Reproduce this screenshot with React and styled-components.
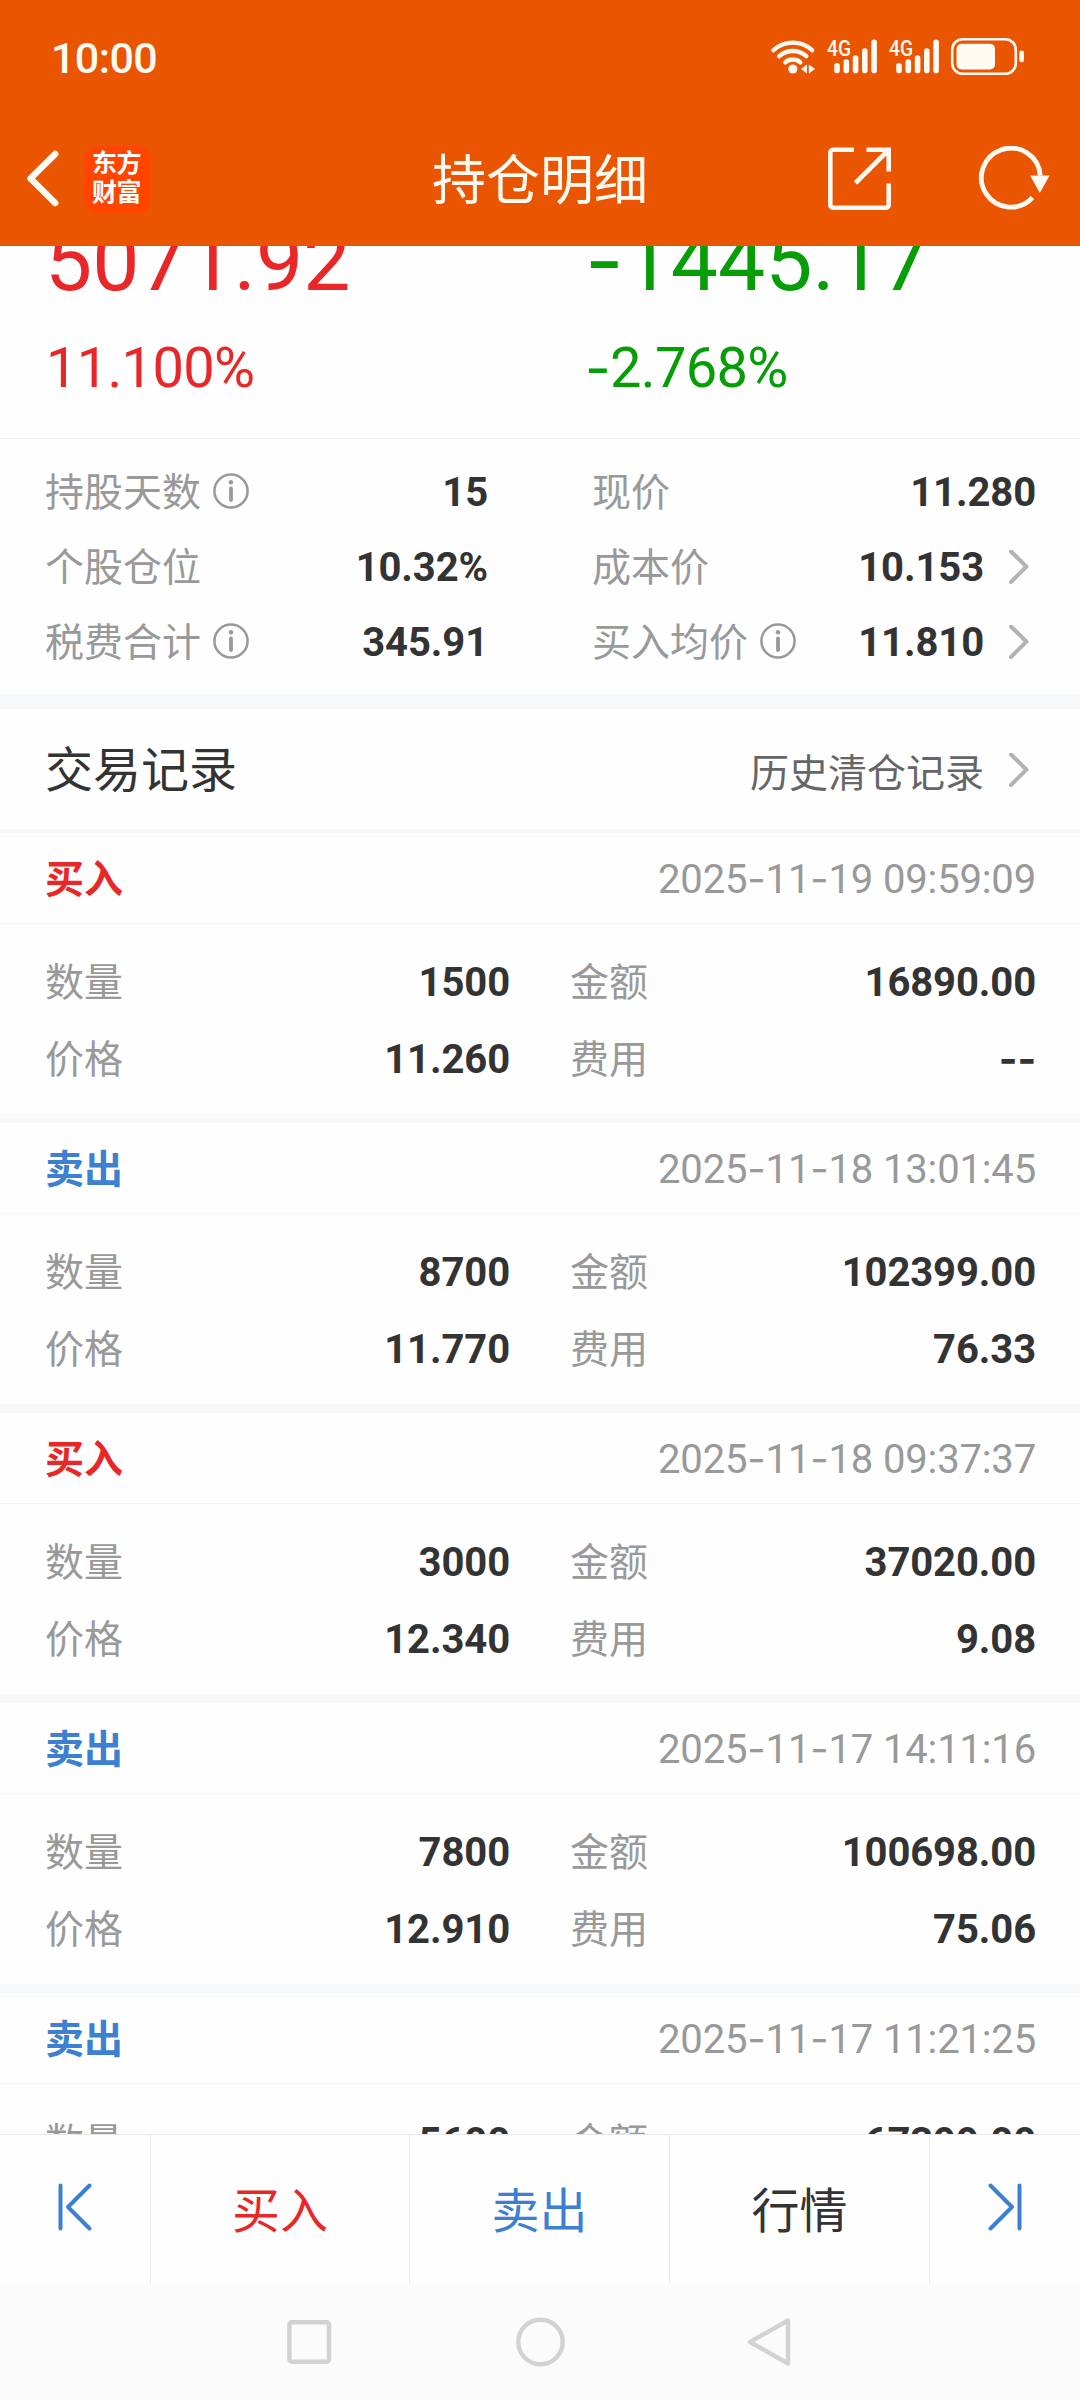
import React from "react";
import styled, { createGlobalStyle } from "styled-components";

const GlobalStyle = createGlobalStyle`
    * {
        box-sizing: border-box;
    }
    body {
        margin: 0;
        background: #fff;
        font-family: "Noto Sans CJK SC", sans-serif;
    }
`;

const RED = "#e82828";
const GREEN = "#069d06";
const BLUE = "#3d80d2";

const Screen = styled.div`
    width: 1080px;
    height: 2400px;
    display: flex;
    flex-direction: column;
    background: #fefefe;
    overflow: hidden;
`;

const Header = styled.header`
    height: 246px;
    flex: none;
    background: #ea5502;
    color: #fffaf2;
`;

const StatusBar = styled.div`
    height: 112px;
    display: flex;
    justify-content: space-between;
    padding: 0 54px 0 51px;
`;

const Clock = styled.span`
    font: 500 43px/117px Roboto, sans-serif;
    letter-spacing: -0.6px;
`;

const StatusIcons = styled.svg`
    width: 256px;
    height: 40px;
    margin-top: 36px;
`;

const NavBar = styled.div`
    height: 134px;
    display: grid;
    grid-template-columns: 400px 1fr 400px;
    align-items: center;
`;

const NavLeft = styled.div`
    display: flex;
    align-items: center;
    gap: 23px;
    padding-left: 25px;
`;

const NavRight = styled.div`
    display: flex;
    align-items: center;
    justify-content: flex-end;
    gap: 85px;
    padding-right: 29px;
`;

const Logo = styled.div`
    width: 67px;
    height: 67px;
    border-radius: 14px;
    background: #ff4500;
    color: #fff;
    font-size: 25px;
    font-weight: 700;
    line-height: 29px;
    letter-spacing: -0.5px;
    text-align: center;
    padding: 1px 2px 0 0;
`;

const Title = styled.h1`
    margin: 0;
    font-size: 54px;
    font-weight: 400;
    line-height: 60px;
    text-align: center;
    padding-bottom: 5px;
`;

const Content = styled.main`
    flex: 1;
    min-height: 0;
    overflow: hidden;
`;

const Profit = styled.section`
    display: grid;
    grid-template-columns: 540px 1fr;
    margin-top: -34px;
    padding: 0 0 38px 45px;
    border-bottom: 1px solid #f3f3f3;
`;

const ProfitItem = styled.div`
    display: flex;
    flex-direction: column;
    gap: 24px;
    color: ${props => props.color};
    font-family: Roboto, sans-serif;
    white-space: nowrap;
`;

const Amount = styled.div`
    font-size: 84px;
    line-height: 100px;
`;

const Percent = styled.div`
    font-size: 56px;
    line-height: 64px;
    letter-spacing: -0.7px;
    padding-left: ${props => props.indent || 0}px;
`;

const Dash = styled.span`
    font-family: Inter, sans-serif;
    line-height: 0;
    vertical-align: -0.01em;
`;

const Summary = styled.section`
    display: grid;
    grid-template-columns: 443px 444px;
    grid-auto-rows: 75px;
    column-gap: 104px;
    padding: 15px 44px 15px 45px;
    border-bottom: 15px solid #f7f8fa;
    height: 270px;
`;

const Cell = styled.div`
    display: flex;
    align-items: center;
    justify-content: space-between;
`;

const Label = styled.span`
    display: flex;
    align-items: center;
    gap: 12px;
    color: #999;
    font-size: 39px;
    line-height: 44px;
    padding-bottom: 6px;

    svg {
        margin-top: 4px;
    }
`;

const Value = styled.span`
    display: flex;
    align-items: center;
    color: #333;
    font: 700 40px/46px Roboto, sans-serif;
    letter-spacing: -0.1px;
`;

const Digits = styled.span`
    padding-top: 3px;
`;

const SectionHead = styled.div`
    height: 124px;
    display: flex;
    align-items: center;
    justify-content: space-between;
    padding: 2px 44px 0 45px;
    border-bottom: 4px solid #f7f8fa;
`;

const SectionTitle = styled.h2`
    margin: 0;
    color: #333;
    font-size: 48px;
    font-weight: 400;
    line-height: 56px;
    padding-bottom: 9px;
`;

const History = styled.a`
    display: flex;
    align-items: center;
    color: #666;
    font-size: 39px;
    line-height: 44px;
`;

const ChevronIcon = styled.svg`
    width: 20px;
    height: 34px;
    margin: 0 7px 0 25px;
`;

const Record = styled.article`
    border-bottom: 9px solid #f7f8fa;
`;

const RecordHead = styled.div`
    height: 91px;
    display: flex;
    align-items: center;
    justify-content: space-between;
    padding: 0 44px 0 45px;
    border-bottom: 1px solid #f5f5f5;
`;

const Side = styled.span`
    color: ${props => props.color};
    font-size: 39px;
    font-weight: 700;
    line-height: 44px;
    padding-bottom: 5px;
`;

const Time = styled.time`
    color: #999;
    font: 400 40px/46px Roboto, sans-serif;
    letter-spacing: -0.15px;
    padding-top: 4px;
`;

const RecordBody = styled.div`
    height: 190px;
    display: grid;
    grid-template-columns: 465px 466px;
    grid-auto-rows: 77px;
    column-gap: 60px;
    padding: 19px 44px 0 45px;
`;

const ActionBar = styled.footer`
    height: 150px;
    flex: none;
    display: grid;
    grid-template-columns: 151px 259px 260px 260px 150px;
    background: #fefefe;
    border-top: 1px solid #e8e8e8;
`;

const Action = styled.button`
    display: flex;
    align-items: center;
    justify-content: center;
    border: 0;
    border-right: 1px solid #ebebeb;
    background: none;
    padding: 0 0 5px;
    color: ${props => props.color};
    font: 400 48px/56px "Noto Sans CJK SC", sans-serif;

    &:last-child {
        border-right: 0;
    }
`;

const SystemNav = styled.nav`
    height: 116px;
    flex: none;
    display: flex;
    justify-content: center;
    align-items: center;
    gap: 180px;
    background: #fbfbfb;
    padding-right: 1px;
`;

const Signal = ({ x }) => (
  <g transform={`translate(${x} 0)`}>
    <text x="0" y="19.5" fontFamily="Roboto" fontWeight="500" fontSize="22" textLength="24" lengthAdjust="spacingAndGlyphs">4G</text>
    <path d="M10 29.8v4.6M19.3 26v8.4M28.6 22v12.4M37.8 15v19.4M47.1 6.4v28" stroke="currentColor" strokeWidth="5.6" strokeLinecap="round" />
  </g>
);

const Status = () => (
  <StatusIcons viewBox="0 0 256 40" fill="currentColor">
    <g fill="none" stroke="currentColor" strokeWidth="4.4" strokeLinecap="round">
      <path d="M3.5 14.2a28.5 28.5 0 0 1 38.6 0" />
      <path d="M9.3 20.2a20 20 0 0 1 27 0" />
      <path d="M15.3 26.3a11.5 11.5 0 0 1 15 0" />
    </g>
    <circle cx="22.8" cy="33" r="4.6" />
    <path d="M31 33l6-4.5v9zM38.8 28.5l6.3 4.5-6.3 4.5z" />
    <Signal x={57} />
    <Signal x={119} />
    <rect x="182.2" y="3.2" width="63.6" height="34.6" rx="10.5" fill="none" stroke="currentColor" strokeWidth="2.6" />
    <rect x="186.5" y="7.8" width="38.5" height="25.6" rx="5" />
    <rect x="249.3" y="14.6" width="4.7" height="11.6" rx="2.3" />
  </StatusIcons>
);

const Chevron = () => (
  <ChevronIcon viewBox="0 0 20 34" fill="none" stroke="#b3b3b3" strokeWidth="4" strokeLinecap="round" strokeLinejoin="round">
    <path d="M2 1.5l15.5 15.2L2 32" />
  </ChevronIcon>
);

const Info = () => (
  <svg width="36" height="36" viewBox="0 0 36 36" fill="none" stroke="#999">
    <circle cx="18" cy="18" r="16.6" strokeWidth="2.5" />
    <path d="M18 15.5v11.5" strokeWidth="3.8" strokeLinecap="round" />
    <circle cx="18" cy="9.2" r="2.2" fill="#999" stroke="none" />
  </svg>
);

// hyphens come from a font with a wider, higher dash
const Figure = ({ children }) =>
  children.split(/(-)/).map((part, index) => (part === "-" ? <Dash key={index}>-</Dash> : part));

const summary = [
  { label: "持股天数", value: "15", info: true },
  { label: "现价", value: "11.280" },
  { label: "个股仓位", value: "10.32%" },
  { label: "成本价", value: "10.153", link: true },
  { label: "税费合计", value: "345.91", info: true },
  { label: "买入均价", value: "11.810", info: true, link: true },
];

const records = [
  { side: "买入", time: "2025-11-19 09:59:09", count: "1500", amount: "16890.00", price: "11.260", fee: "--" },
  { side: "卖出", time: "2025-11-18 13:01:45", count: "8700", amount: "102399.00", price: "11.770", fee: "76.33" },
  { side: "买入", time: "2025-11-18 09:37:37", count: "3000", amount: "37020.00", price: "12.340", fee: "9.08" },
  { side: "卖出", time: "2025-11-17 14:11:16", count: "7800", amount: "100698.00", price: "12.910", fee: "75.06" },
  { side: "卖出", time: "2025-11-17 11:21:25", count: "5600", amount: "67399.00" },
];

const Field = ({ label, value, info, link }) => (
  <Cell>
    <Label>
      {label}
      {info && <Info />}
    </Label>
    <Value>
      <Digits><Figure>{value}</Figure></Digits>
      {link && <Chevron />}
    </Value>
  </Cell>
);

const App = () => (
  <>
    <GlobalStyle />
    <Screen>
      <Header>
        <StatusBar>
          <Clock>10:00</Clock>
          <Status />
        </StatusBar>
        <NavBar>
          <NavLeft>
            <svg width="36" height="60" viewBox="0 0 36 60" fill="none" stroke="currentColor" strokeWidth="6.5" strokeLinecap="round" strokeLinejoin="round">
              <path d="M30.2 5L5.5 29.5l24.7 24.5" />
            </svg>
            <Logo>东方<br />财富</Logo>
          </NavLeft>
          <Title>持仓明细</Title>
          <NavRight>
            <svg width="64" height="64" viewBox="0 0 64 64" fill="none" stroke="currentColor" strokeWidth="4.6">
              <path d="M26 2.8H5.3a3 3 0 0 0-3 3v52a3 3 0 0 0 3 3h52.4a3 3 0 0 0 3-3V36.5" />
              <path d="M38.5 2.8h22.2V24.5M60 3.5L27.5 36" />
            </svg>
            <svg width="74" height="66" viewBox="0 0 74 66" fill="none" stroke="currentColor" strokeWidth="4.8">
              <path d="M63.3 29.5a29.5 29.5 0 1 0-7.8 22.2" />
              <path d="M53.2 29.5H72.6L62.8 47z" fill="currentColor" stroke="none" />
            </svg>
          </NavRight>
        </NavBar>
      </Header>
      <Content>
        <Profit>
          <ProfitItem color={RED}>
            <Amount>5071.92</Amount>
            <Percent indent={1}>11.100%</Percent>
          </ProfitItem>
          <ProfitItem color={GREEN}>
            <Amount><Figure>-1445.17</Figure></Amount>
            <Percent><Figure>-2.768%</Figure></Percent>
          </ProfitItem>
        </Profit>
        <Summary>
          {summary.map(item => <Field key={item.label} {...item} />)}
        </Summary>
        <SectionHead>
          <SectionTitle>交易记录</SectionTitle>
          <History>历史清仓记录<Chevron /></History>
        </SectionHead>
        {records.map(record => (
          <Record key={record.time}>
            <RecordHead>
              <Side color={record.side === "买入" ? RED : BLUE}>{record.side}</Side>
              <Time><Figure>{record.time}</Figure></Time>
            </RecordHead>
            <RecordBody>
              <Field label="数量" value={record.count} />
              <Field label="金额" value={record.amount} />
              {record.price && <Field label="价格" value={record.price} />}
              {record.fee && <Field label="费用" value={record.fee} />}
            </RecordBody>
          </Record>
        ))}
      </Content>
      <ActionBar>
        <Action color={BLUE}>
          <svg width="36" height="50" viewBox="0 0 36 50" fill="none" stroke="currentColor" strokeWidth="4" strokeLinecap="round" strokeLinejoin="round">
            <path d="M3.5 3.5v43M32.5 3.5L11 25l21.5 21.5" />
          </svg>
        </Action>
        <Action color={RED}>买入</Action>
        <Action color={BLUE}>卖出</Action>
        <Action color="#333">行情</Action>
        <Action color={BLUE}>
          <svg width="36" height="50" viewBox="0 0 36 50" fill="none" stroke="currentColor" strokeWidth="4" strokeLinecap="round" strokeLinejoin="round">
            <path d="M32.5 3.5v43M3.5 3.5L25 25 3.5 46.5" />
          </svg>
        </Action>
      </ActionBar>
      <SystemNav>
        <svg width="50" height="50" viewBox="0 0 50 50" fill="none" stroke="#d2d2d2" strokeWidth="4.4">
          <rect x="4.4" y="5.2" width="39.6" height="39.6" rx="2.5" />
        </svg>
        <svg width="50" height="50" viewBox="0 0 50 50" fill="none" stroke="#d2d2d2" strokeWidth="4.4">
          <circle cx="25.5" cy="25" r="22.2" />
        </svg>
        <svg width="50" height="50" viewBox="0 0 50 50" fill="none" stroke="#d2d2d2" strokeWidth="4.4" strokeLinejoin="round">
          <path d="M5 25L43 3.5v43z" />
        </svg>
      </SystemNav>
    </Screen>
  </>
);

export default App;
